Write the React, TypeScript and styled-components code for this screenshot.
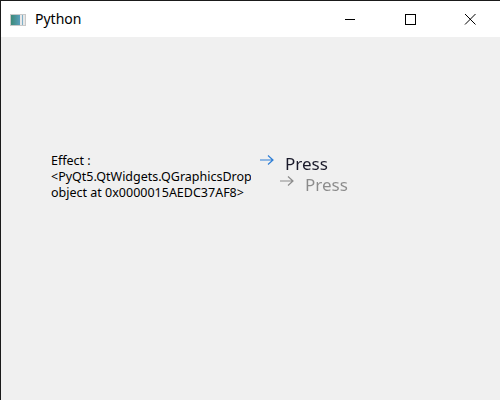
import styled, { createGlobalStyle } from "styled-components";

const Global = createGlobalStyle`
  html, body {
    margin: 0;
    padding: 0;
    background: #f0f0f0;
  }
  #root {
    width: 500px;
    height: 400px;
  }
`;

const Frame = styled.div`
  width: 500px;
  height: 400px;
  box-sizing: border-box;
  border-top: 1px solid #1a1a1a;
  border-left: 1px solid #1a1a1a;
  display: flex;
  flex-direction: column;
  font-family: "Noto Sans", "Open Sans", sans-serif;
  overflow: hidden;
`;

const TitleBar = styled.div`
  height: 36px;
  background: #ffffff;
  display: flex;
  align-items: center;
  flex-shrink: 0;
`;

const AppIcon = styled.div`
  width: 16px;
  height: 12px;
  margin-left: 9px;
  margin-right: 9px;
  margin-top: 1px;
  box-sizing: border-box;
  border: 1px solid #c9c9c9;
  background: linear-gradient(90deg, #3c8a78 0, #5a9fbc 9px, #e8e8e8 9px, #e8e8e8 11px, #7fb0c8 11px, #7fb0c8 12px, #e8e8e8 12px);
`;

const Title = styled.span`
  font-family: "Segoe UI", "Noto Sans", sans-serif;
  font-size: 14px;
  color: #000;
  flex: 1;
  margin-top: -1px;
`;

const Control = styled.div`
  width: 60px;
  height: 36px;
  display: flex;
  align-items: center;
  justify-content: center;
`;

const Body = styled.div`
  flex: 1;
  background: #f0f0f0;
  display: flex;
  align-items: flex-start;
  padding: 116px 0 0 50px;
`;

const Label = styled.div`
  width: 200px;
  font-size: 12.5px;
  line-height: 16px;
  color: #000;
  white-space: nowrap;
  overflow: hidden;
`;

const PressButton = styled.div`
  display: flex;
  align-items: flex-start;
  margin-left: 8px;
  margin-top: 1px;
  filter: drop-shadow(20px 21px 0 rgba(128, 128, 128, 0.9));
`;

const Arrow = styled.svg`
  width: 16px;
  height: 12px;
  margin-right: 10px;
`;

const PressText = styled.span`
  font-family: "Segoe UI", "Noto Sans", sans-serif;
  font-size: 17px;
  color: #1a1a2a;
  line-height: 22px;
  margin-top: -1px;
`;

export default function App() {
  return (
    <>
      <Global />
      <Frame>
        <TitleBar>
          <AppIcon />
          <Title>Python</Title>
          <Control>
            <svg width="12" height="12" viewBox="0 0 12 12">
              <line x1="1" y1="6.5" x2="11" y2="6.5" stroke="#000" strokeWidth="1" />
            </svg>
          </Control>
          <Control>
            <svg width="12" height="12" viewBox="0 0 12 12">
              <rect x="1.5" y="1.5" width="10" height="10" fill="none" stroke="#000" strokeWidth="1" />
            </svg>
          </Control>
          <Control>
            <svg width="12" height="12" viewBox="0 0 12 12">
              <path d="M1 1 L11.5 11.5 M11.5 1 L1 11.5" stroke="#000" strokeWidth="1" />
            </svg>
          </Control>
        </TitleBar>
        <Body>
          <Label>
            Effect :
            <br />
            &lt;PyQt5.QtWidgets.QGraphicsDropShadowEffect
            <br />
            object at 0x0000015AEDC37AF8&gt;
          </Label>
          <PressButton>
            <Arrow viewBox="0 0 16 12">
              <path d="M1 6 H14 M9 1.5 L14 6 L9 10.5" fill="none" stroke="#2f7fd6" strokeWidth="1.2" />
            </Arrow>
            <PressText>Press</PressText>
          </PressButton>
        </Body>
      </Frame>
    </>
  );
}
